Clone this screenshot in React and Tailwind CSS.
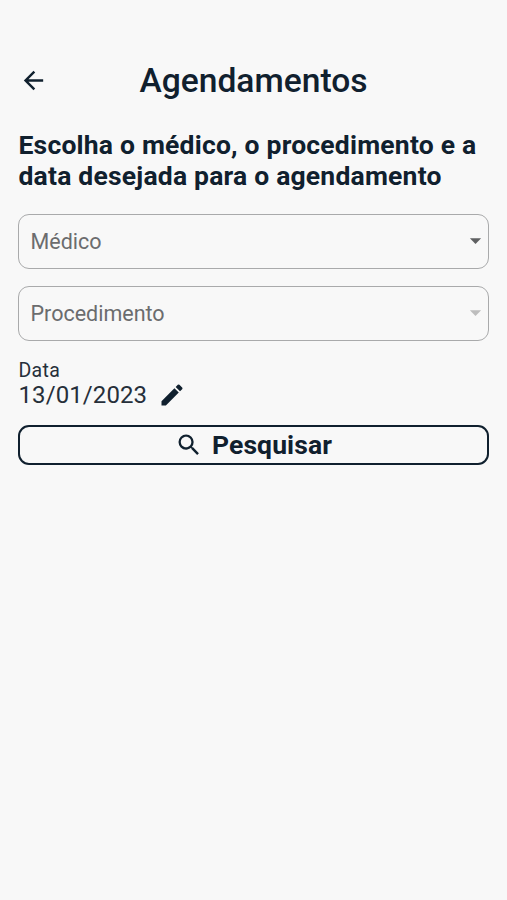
import React, { useState } from "react";
import { MdArrowBack, MdArrowDropDown, MdEdit, MdSearch } from "react-icons/md";

const SelectField = ({ label, disabled = false }) => (
  <button
    disabled={disabled}
    className="flex h-[55px] w-full items-center justify-between rounded-[11px] border border-[#a9aaab] pl-[11.5px] text-left"
  >
    <span className="pt-px text-[21.5px] text-[#6b6c6e]">{label}</span>
    <MdArrowDropDown className={`-mr-px mb-[3px] size-[27px] ${disabled ? "text-[#bdbdbd]" : "text-[#5f6062]"}`} />
  </button>
);

export default function App() {
  const [date] = useState("13/01/2023");

  return (
    <div className="min-h-screen bg-[#f8f8f8] px-[18px] pt-[60px] font-['Roboto',sans-serif] text-[#10202e]">
      {/* Header */}
      <header className="relative flex h-[42px] items-center justify-center">
        <button className="absolute left-[1px] mb-px" aria-label="Voltar">
          <MdArrowBack className="mb-px size-[29px]" />
        </button>
        <h1 className="text-[33.6px] font-medium leading-[42px]">Agendamentos</h1>
      </header>

      <h2 className="mt-[27px] whitespace-nowrap pl-[0.5px] text-[26.5px] font-bold leading-[31px] tracking-[0.2px]">
        Escolha o médico, o procedimento e a<br />
        data desejada para o agendamento
      </h2>

      <div className="mt-[23px] flex flex-col gap-[17px]">
        <SelectField label="Médico" />
        <SelectField label="Procedimento" disabled />
      </div>

      {/* Date */}
      <div className="mt-[18px] text-[#262f3a]">
        <p className="pl-[0.5px] text-[19.5px] leading-[24px] tracking-[0.3px]">Data</p>
        <div className="flex h-[23px] items-center">
          <span className="pl-[0.5px] text-[24px] leading-[26px] tracking-[0.1px]">{date}</span>
          <button className="ml-[11px] text-[#10202e]" aria-label="Editar data">
            <MdEdit className="size-[28px]" />
          </button>
        </div>
      </div>

      <button className="mt-[19px] flex h-[40px] w-full items-center justify-center gap-[9px] rounded-[11px] border-2 border-[#10202e]">
        <MdSearch className="size-[28px]" />
        <span className="text-[26.5px] font-bold leading-[30px] tracking-[0.1px]">Pesquisar</span>
      </button>
    </div>
  );
}
